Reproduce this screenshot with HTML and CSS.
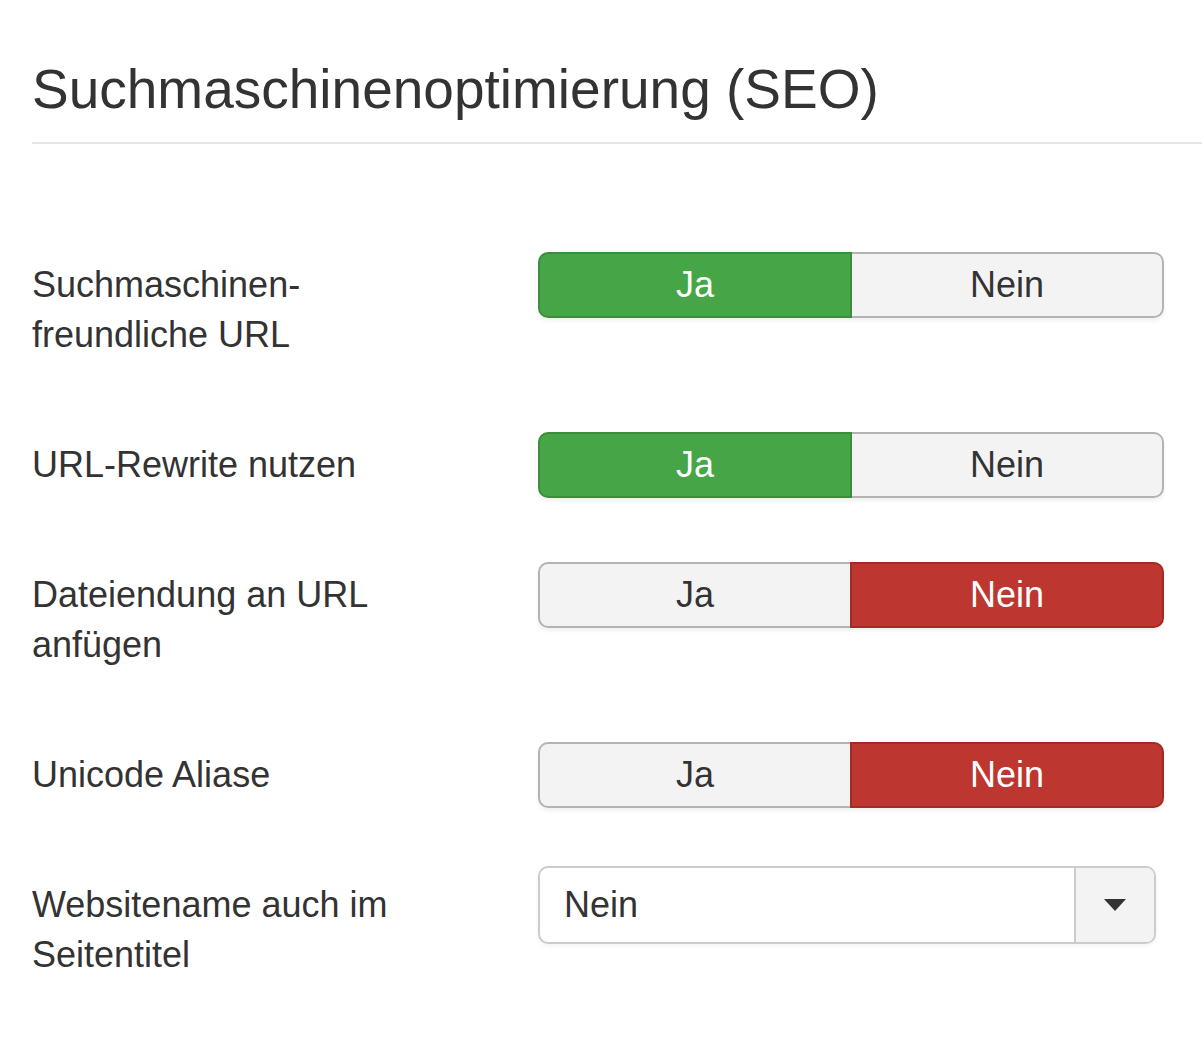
FILE: index.html
```html
<!DOCTYPE html>
<html lang="de">
<head>
    <meta charset="UTF-8">
    <title>Suchmaschinenoptimierung (SEO)</title>
    <link rel="stylesheet" href="styles.css">
</head>
<body>
    <div class="settings">
        <h2 class="section-title">Suchmaschinenoptimierung (SEO)</h2>

        <div class="control-group">
            <label class="control-label">Suchmaschinen-<br>freundliche URL</label>
            <div class="btn-group">
                <span class="btn btn-yes">Ja</span>
                <span class="btn">Nein</span>
            </div>
        </div>

        <div class="control-group">
            <label class="control-label">URL-Rewrite nutzen</label>
            <div class="btn-group">
                <span class="btn btn-yes">Ja</span>
                <span class="btn">Nein</span>
            </div>
        </div>

        <div class="control-group">
            <label class="control-label">Dateiendung an URL<br>anfügen</label>
            <div class="btn-group">
                <span class="btn">Ja</span>
                <span class="btn btn-no">Nein</span>
            </div>
        </div>

        <div class="control-group">
            <label class="control-label">Unicode Aliase</label>
            <div class="btn-group">
                <span class="btn">Ja</span>
                <span class="btn btn-no">Nein</span>
            </div>
        </div>

        <div class="control-group">
            <label class="control-label">Websitename auch im<br>Seitentitel</label>
            <div class="select-box">
                <span class="select-value">Nein</span>
                <span class="select-arrow">
                    <svg width="22" height="12" viewBox="0 0 22 12"><path d="M0 0 L22 0 L11 12 Z" fill="#333"/></svg>
                </span>
            </div>
        </div>
    </div>
</body>
</html>
```

FILE: styles.css
```css
* {
    box-sizing: border-box;
}

body {
    margin: 0;
    background: #fff;
    color: #333;
    font-family: "Liberation Sans", Arial, sans-serif;
    font-size: 36px;
    line-height: 50px;
}

.settings {
    padding: 55px 0 0 32px;
}

.section-title {
    margin: 0 0 108px;
    padding: 0 0 19px;
    font-size: 55px;
    font-weight: normal;
    line-height: 68px;
    color: #333;
    border-bottom: 2px solid #e5e5e5;
}

.control-group {
    display: flex;
    align-items: flex-start;
    margin-bottom: 64px;
}

.control-label {
    width: 506px;
    flex-shrink: 0;
    padding: 8px 0;
}

.btn-group {
    display: flex;
    width: 626px;
    height: 66px;
    border-radius: 10px;
    box-shadow: 0 3px 4px rgba(0, 0, 0, 0.06);
}

.btn {
    flex: 1;
    text-align: center;
    line-height: 62px;
    background: #f3f3f3;
    border: 2px solid #b3b3b3;
    color: #333;
}

.btn:first-child {
    border-radius: 10px 0 0 10px;
    border-right: none;
}

.btn:last-child {
    border-radius: 0 10px 10px 0;
    border-left: none;
}

.btn-yes {
    background: #46a546;
    border-color: #3b8f3b;
    color: #fff;
}

.btn-group .btn-yes {
    border-right: 2px solid #3b8f3b;
}

.btn-no {
    background: #bd362f;
    border-color: #a12b25;
    color: #fff;
}

.btn-group .btn-no {
    border-left: 2px solid #a12b25;
}

.select-box {
    display: flex;
    width: 618px;
    height: 78px;
    margin-top: -6px;
    border: 2px solid #ccc;
    border-radius: 10px;
    box-shadow: 0 2px 4px rgba(0, 0, 0, 0.05);
    overflow: hidden;
}

.select-value {
    flex: 1;
    padding-left: 24px;
    line-height: 74px;
}

.select-arrow {
    width: 80px;
    display: flex;
    align-items: center;
    justify-content: center;
    background: #f3f3f3;
    border-left: 2px solid #ccc;
}
```
